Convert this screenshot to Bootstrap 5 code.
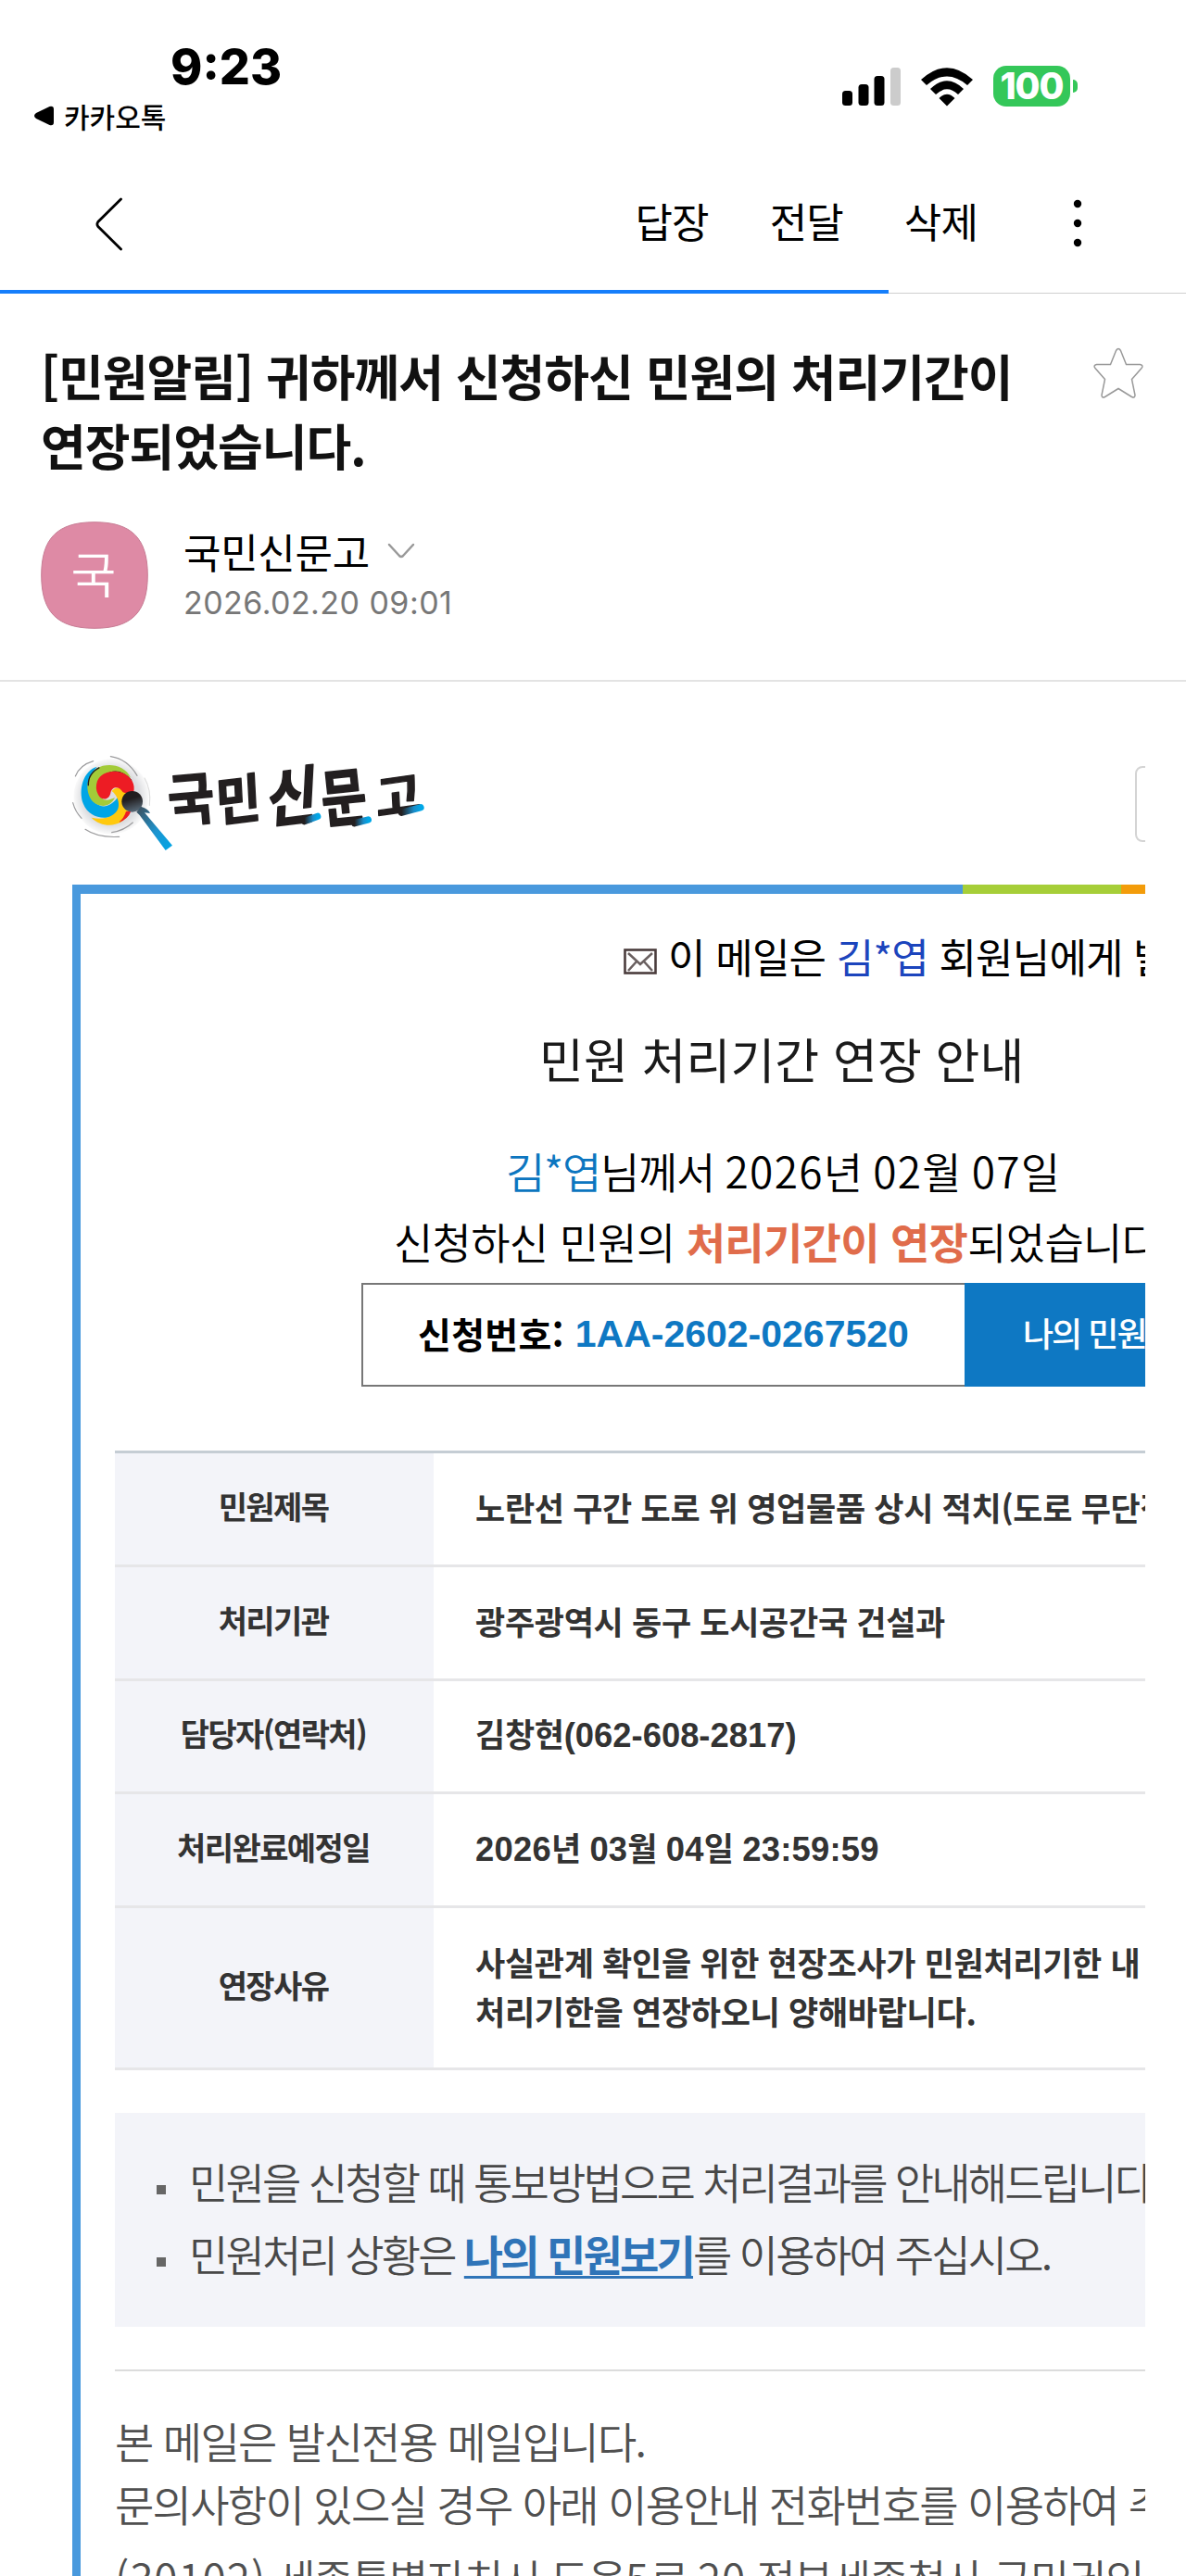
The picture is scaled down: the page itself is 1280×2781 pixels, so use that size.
<!DOCTYPE html>
<html lang="ko">
<head>
<meta charset="utf-8">
<meta name="viewport" content="width=device-width, initial-scale=1">
<title>국민신문고 메일</title>
<link href="https://cdn.jsdelivr.net/npm/bootstrap@5.3.0/dist/css/bootstrap.min.css" rel="stylesheet">
<style>
  html, body { width: 1280px; height: 2781px; overflow: hidden; }
  body { font-family: "Noto Sans CJK KR", "Noto Sans", sans-serif; color: #111; background: #fff; }
  svg { display: block; flex: none; }
  .inter { font-family: Inter, "Noto Sans", sans-serif; }
  .helv { font-family: "Liberation Sans", Arial, sans-serif; }
  .nw { white-space: nowrap; }

  .status { height: 168px; }
  .clock { font-size: 52px; font-weight: 800; line-height: 60px; padding: 43px 0 0 184px; letter-spacing: 0; color: #000; }
  .backapp { font-size: 30px; font-weight: 500; line-height: 44px; padding-left: 36px; gap: 10px; color: #000; }
  .sysicons { padding: 71px 117px 0 0; }
  .batt { width: 83px; height: 44px; border-radius: 14px; background: #34c759; color: #fff; font-size: 39px; font-weight: 800; line-height: 44px; letter-spacing: -1px; }
  .batt-cap { width: 5px; height: 14px; margin: 15px 0 0 3px; border-radius: 0 5px 5px 0; background: #34c759; }

  .toolbar { height: 145px; padding: 0 112px 0 102px; }
  .toolbar a { color: #000; text-decoration: none; font-size: 44px; line-height: 60px; letter-spacing: -.9px; margin-bottom: 6px; }
  .actions { gap: 66px; }
  .kebab { margin-left: 37px; }
  .loadbar { height: 4px; border-radius: 0; background: linear-gradient(#fff 3px, #cfcfcf 3px); }
  .loadbar .progress-bar { background: #157efb; }

  .mailhead { height: 419px; padding: 51px 45px 0 44px; border-bottom: 2px solid #e3e3e3; }
  .subject { font-size: 53px; font-weight: 700; line-height: 74.5px; letter-spacing: -1px; margin: 0; color: #111; }
  .senderrow { margin-top: 46px; }
  .avatar { width: 116px; height: 116px; }
  .sender { font-size: 44px; line-height: 54px; letter-spacing: -.3px; color: #000; }
  .sentat { font-size: 34px; line-height: 44px; color: #777; letter-spacing: .45px; margin-top: 7px; }

  .mailbody { margin-left: 78px; width: 1158px; height: 2045px; overflow: hidden; }
  .wide { width: 1534px; }
  .brandrow { height: 219px; padding-top: 76px; }
  .ghost { width: 387px; height: 82px; margin-top: 15px; border: 2px solid #d4d4d4; border-radius: 8px; }
  .stripe { height: 10px; }
  .stripe div:nth-child(1) { width: 961px; background: #4999dd; }
  .stripe div:nth-child(2) { width: 171px; background: #a6ce38; }
  .stripe div:nth-child(3) { width: 402px; background: #f39c0a; }
  .frame { border-left: 9px solid #4999dd; height: 1830px; }

  .notice-to { padding: 37px 0 0 586px; height: 105px; font-size: 44px; line-height: 60px; letter-spacing: -.8px; color: #000; }
  .notice-to b { font-weight: 400; color: #1c45bd; }
  .heading { font-size: 52px; line-height: 70px; letter-spacing: .1px; padding: 38px 0 0 495px; height: 156px; color: #1a1a1a; margin: 0; font-weight: 400; }
  .sumline { font-size: 46px; line-height: 75.5px; font-weight: 350; letter-spacing: -.7px; color: #000; }
  .sumline.first { letter-spacing: -1.3px; }
  .sumline .when { letter-spacing: -.9px; }
  .sumline .when i { font-style: normal; letter-spacing: 1.3px; }
  .sumline .who { color: #0c76c0; }
  .sumline .hot { color: #e06c4b; font-weight: 700; }
  .reqbox { margin: 8px 0 0 303px; width: 910px; height: 112px; }
  .reqno { width: 651px; border: 2px solid #777; border-right: 0; padding-left: 59px; font-weight: 700; }
  .reqno .ko { font-size: 39px; color: #000; letter-spacing: .3px; margin-bottom: 3px; }
  .reqno .num { font-size: 41px; color: #0e78c3; margin-left: 12px; }
  .reqbtn { width: 259px; background: #0e78c3; color: #fff; font-size: 36px; font-weight: 500; letter-spacing: -2px; padding: 0 0 7px 63px; }

  .facts { margin: 69px 0 0 37px; width: 1450px; border-top: 3px solid #c5cdd4; font-weight: 700; color: #333; }
  .fact { min-height: 122.8px; border-bottom: 3px solid #e6e6e8; }
  .fact.tall { min-height: 175px; }
  .fk { width: 344px; background: #f3f4f9; font-size: 34px; letter-spacing: -1.6px; padding: 0 2px 7px 0; }
  .fv { padding: 0 0 4px 45px; font-size: 35px; line-height: 53px; letter-spacing: -.3px; }
  .fv .helv { font-size: 36.4px; letter-spacing: 0; }
  .fv .stamp .helv { letter-spacing: .25px; }

  .tips { margin: 46px 0 0 37px; width: 1450px; height: 231px; background: #f3f4f9; padding: 34px 0 0 45px; list-style: none; font-size: 46px; line-height: 78px; letter-spacing: -2.8px; color: #484848; font-weight: 350; }
  .tips li { gap: 25px; }
  .tips li::before { content: ""; width: 10px; height: 10px; margin-top: 20px; background: #666; flex: none; }
  .tips a { color: #2f74b8; font-weight: 700; text-decoration: underline; text-decoration-thickness: 3px; text-underline-offset: 5px; }
  .rule { margin: 46px 0 0 37px; border-top: 2px solid #dcdcdc; opacity: 1; width: 1450px; }
  .foot { margin: 40px 0 0 37px; font-size: 46px; line-height: 68px; letter-spacing: -1.7px; color: #505050; font-weight: 350; }
  .foot p { margin: 0; }
  .foot i { font-style: normal; letter-spacing: .9px; }
</style>
</head>
<body>
<header class="status d-flex justify-content-between">
  <div>
    <div class="clock inter">9:23</div>
    <div class="backapp d-flex align-items-center nw">
      <svg width="23" height="22" viewBox="0 0 23 22"><path d="M3 8 17.500 1Q22 0 22 4V18Q22 22 17.500 21L3 14Q-1 11 3 8Z"/></svg>
      <span>카카오톡</span>
    </div>
  </div>
  <div class="sysicons d-flex">
    <svg width="64" height="44" viewBox="0 0 64 44"><rect x="0" y="27" width="11" height="16" rx="3.500"/><rect x="17.500" y="20" width="11" height="23" rx="3.500"/><rect x="34.500" y="11" width="11" height="32" rx="3.500"/><rect x="52" y="2" width="11" height="41" rx="3.500" fill="#ccc"/></svg>
    <svg width="56" height="44" viewBox="0 0 56 44" style="margin:0 22px 0 21px"><path d="M0 15Q28 -10.500 56 15L50 21Q28 2 6 21ZM10 25Q28 7.500 46 25L40 31Q28 19.500 16 31ZM19.500 35Q28 26.500 36.500 35L28 43.500Z"/></svg>
    <div class="batt inter text-center">100</div>
    <div class="batt-cap"></div>
  </div>
</header>

<nav class="toolbar d-flex align-items-center justify-content-between nw">
  <svg width="32" height="60" viewBox="0 0 32 60"><path d="M28.500 4 3.800 28.500Q2 31 3.800 33.500L28.500 58" fill="none" stroke="#000" stroke-width="2.800" stroke-linecap="round"/></svg>
  <div class="actions d-flex align-items-center">
    <a href="#">답장</a><a href="#">전달</a><a href="#">삭제</a>
    <svg width="10" height="52" viewBox="0 0 10 52" class="kebab"><circle cx="5" cy="5" r="4.200"/><circle cx="5" cy="26" r="4.200"/><circle cx="5" cy="47" r="4.200"/></svg>
  </div>
</nav>
<div class="progress loadbar"><div class="progress-bar" style="width:74.9%"></div></div>

<section class="mailhead">
  <div class="d-flex justify-content-between">
    <h1 class="subject nw">[민원알림] 귀하께서 신청하신 민원의 처리기간이<br>연장되었습니다.</h1>
    <svg width="56" height="56" viewBox="0 0 56 56" style="margin:7px 0 0"><path d="M25.500 3.500Q28 -.5 30.500 3.500L36.500 18.500H51.500Q55.500 19.500 53 22.500L42.500 34.500 46 51.500Q46 55 42.500 53.500L28 44.500 13.500 53.500Q10 55 10 51.500L13.500 34.500 3 22.500Q.5 19.500 4.500 18.500H19.500Z" fill="#fff" stroke="#999" stroke-width="1.500"/></svg>
  </div>
  <div class="senderrow d-flex">
    <svg class="avatar" viewBox="0 0 116 116"><path d="M58 .7C98 .7 115.300 18 115.300 58S98 115.300 58 115.300.7 98 .7 58 18 .7 58 .7Z" fill="#de8aa5" stroke="#c77c94"/><text x="57" y="78" text-anchor="middle" font-size="53" font-weight="350" fill="#fff">국</text></svg>
    <div style="padding:5px 0 0 38px">
      <div class="d-flex align-items-center sender nw"><span>국민신문고</span>
        <svg width="30" height="18" viewBox="0 0 30 18" style="margin-left:19px"><path d="M2 2 13 14Q15 16 17 14L28 2" fill="none" stroke="#999" stroke-width="2.500" stroke-linecap="round"/></svg></div>
      <div class="sentat inter">2026.02.20 09:01</div>
    </div>
  </div>
</section>

<main class="mailbody">
  <div class="wide">
    <div class="brandrow d-flex justify-content-between nw">
      <svg width="384" height="108" viewBox="54 96 1152 324">
        <defs>
          <linearGradient id="drum" x1="0" y1="0" x2=".3" y2="1"><stop offset=".45" stop-color="#211d1e"/><stop offset="1" stop-color="#52616e"/></linearGradient>
          <linearGradient id="stick" x1="0" y1="0" x2="1" y2="1"><stop offset="0" stop-color="#3f4b56"/><stop offset=".55" stop-color="#1d94cf"/><stop offset="1" stop-color="#00a7e7"/></linearGradient>
          <linearGradient id="tip"><stop offset="0" stop-color="#231f20"/><stop offset=".65" stop-color="#1a8cc8"/><stop offset="1" stop-color="#00a7e7"/></linearGradient>
          <radialGradient id="halo"><stop offset=".75" stop-color="#dcdde0"/><stop offset="1" stop-color="#fafafa"/></radialGradient>
        </defs>
        <ellipse cx="180" cy="240" rx="122" ry="122" fill="url(#halo)"/>
        <g fill="none" stroke="#9b9b9d" stroke-width="3.500" stroke-linecap="round">
          <path d="M64 174Q78 138 122 125M178 110Q232 118 264 172M56 260Q64 290 84 310M96 346Q136 374 206 370M182 356Q222 350 250 324"/>
          <path d="M288 180Q310 218 304 268" stroke="#ddd"/>
        </g>
        <path d="M134 143C90 156 72 218 90 264 106 304 152 318 188 302 208 288 210 262 200 244 178 274 152 278 130 262 98 238 102 180 134 143Z" fill="#00a5e6"/>
        <path d="M134 148C166 130 222 134 244 180 216 156 178 154 152 178 132 202 134 236 156 250 170 254 180 248 192 244 176 276 142 276 120 256 94 224 98 174 134 148Z" fill="#a3cb38"/>
        <path d="M106 205Q104 166 142 146M160 170Q205 142 246 188" fill="none" stroke="#231f20" stroke-width="4"/>
        <path d="M182 222C200 200 234 214 230 246L240 292C218 338 154 346 116 308 152 316 190 308 202 280 208 262 202 238 182 222Z" fill="#ffc90e"/>
        <path d="M204 324Q234 314 244 288L228 288Q222 310 204 324Z" fill="#ed1c24"/>
        <path d="M135 190C150 156 200 150 230 170 252 186 260 208 250 236L218 226C206 204 182 206 178 228 174 252 148 254 138 234 130 220 130 205 135 190Z" fill="#ed1c24"/>
        <ellipse cx="248" cy="256" rx="34" ry="34" fill="url(#drum)"/>
        <path d="M262 290 276 272Q302 280 306 294L288 292 378 398 356 414 272 300Z" fill="url(#stick)"/>
        <g font-weight="700" font-size="190" fill="#231f20" stroke="#231f20" stroke-width="5" stroke-linejoin="round">
          <text transform="translate(370 322) rotate(-5) scale(.86 .97)">국</text>
          <text transform="translate(522 322) rotate(-7) skewX(-4) scale(.84 .90)">민</text>
          <text transform="translate(684 324) rotate(-7) skewX(-10) scale(.92 1.06)">신</text>
          <text transform="translate(868 324) rotate(-6) scale(.84 1.06)">문</text>
          <text transform="translate(1040 306) rotate(-8) skewX(-5) scale(.84 .82)">고</text>
        </g>
        <g fill="none" stroke-width="22" stroke-linecap="round">
          <path d="M806 320 848 304" stroke="url(#tip)"/><path d="M968 326 1012 315" stroke="url(#tip)"/><path d="M1120 292 1182 275" stroke="url(#tip)"/>
        </g>
      </svg>
      <div class="ghost"></div>
    </div>
    <div class="stripe d-flex"><div></div><div></div><div></div></div>
    <div class="frame nw">
      <div class="notice-to d-flex align-items-start">
        <svg width="36" height="28" viewBox="0 0 36 28" style="margin:22px 12px 0 0"><rect x="1.500" y="1.500" width="33" height="25" fill="#fff" stroke="#4a3c3c" stroke-width="2.600"/><path d="M5 5 18 17 31 5M5 24 14 14M31 24 22 14" fill="none" stroke="#6a6060" stroke-width="2.600"/></svg>
        <span>이 메일은 <b>김*엽</b> 회원님에게 발송되었습니다.</span>
      </div>
      <h2 class="heading">민원 처리기간 연장 안내</h2>
      <div class="sumline first" style="padding-left:459px"><span class="who">김*엽</span>님께서 <span class="when"><i>2026</i>년 <i>02</i>월 <i>07</i>일</span></div>
      <div class="sumline" style="padding-left:338px">신청하신 민원의 <span class="hot">처리기간이 연장</span>되었습니다.</div>
      <div class="reqbox d-flex">
        <div class="reqno d-flex align-items-center"><span class="ko">신청번호:</span><span class="num helv">1AA-2602-0267520</span></div>
        <div class="reqbtn d-flex align-items-center">나의 민원보기</div>
      </div>

      <div class="facts">
        <div class="fact d-flex"><div class="fk d-flex align-items-center justify-content-center">민원제목</div><div class="fv d-flex align-items-center">노란선 구간 도로 위 영업물품 상시 적치(도로 무단점용)</div></div>
        <div class="fact d-flex"><div class="fk d-flex align-items-center justify-content-center">처리기관</div><div class="fv d-flex align-items-center">광주광역시 동구 도시공간국 건설과</div></div>
        <div class="fact d-flex"><div class="fk d-flex align-items-center justify-content-center">담당자(연락처)</div><div class="fv d-flex align-items-center"><span>김창현<span class="helv">(062-608-2817)</span></span></div></div>
        <div class="fact d-flex"><div class="fk d-flex align-items-center justify-content-center">처리완료예정일</div><div class="fv d-flex align-items-center"><span class="stamp"><span class="helv">2026</span>년 <span class="helv">03</span>월 <span class="helv">04</span>일 <span class="helv">23:59:59</span></span></div></div>
        <div class="fact tall d-flex"><div class="fk d-flex align-items-center justify-content-center">연장사유</div><div class="fv d-flex align-items-center"><span>사실관계 확인을 위한 현장조사가 민원처리기한 내<br>처리기한을 연장하오니 양해바랍니다.</span></div></div>
      </div>

      <ul class="tips">
        <li class="d-flex align-items-center"><span>민원을 신청할 때 통보방법으로 처리결과를 안내해드립니다.</span></li>
        <li class="d-flex align-items-center"><span>민원처리 상황은 <a href="#">나의 민원보기</a>를 이용하여 주십시오.</span></li>
      </ul>
      <hr class="rule">
      <div class="foot">
        <p>본 메일은 발신전용 메일입니다.</p>
        <p>문의사항이 있으실 경우 아래 이용안내 전화번호를 이용하여 주십시오.</p>
        <p style="padding-top:12px"><i>(30102)</i> 세종특별자치시 도움<i>5</i>로 <i>20</i> 정부세종청사 국민권익위원회</p>
      </div>
    </div>
  </div>
</main>
<script src="https://cdn.jsdelivr.net/npm/bootstrap@5.3.0/dist/js/bootstrap.bundle.min.js"></script>
</body>
</html>
